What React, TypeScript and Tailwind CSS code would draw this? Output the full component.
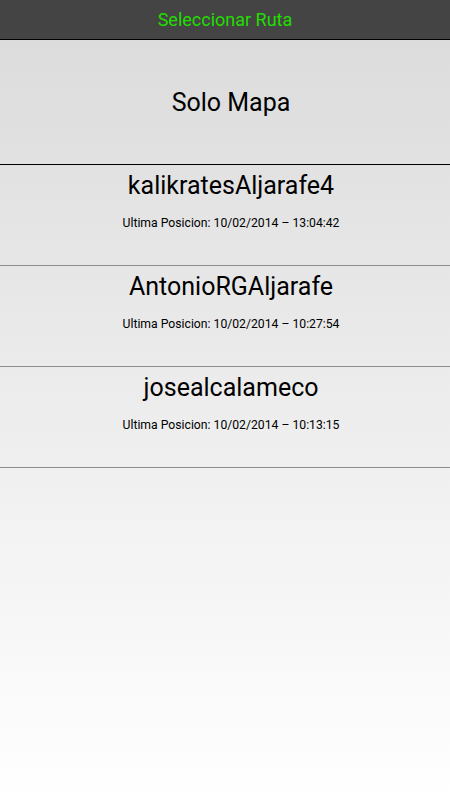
import React from "react";

const rows = [
  { name: "kalikratesAljarafe4", time: "10/02/2014 – 13:04:42" },
  { name: "AntonioRGAljarafe", time: "10/02/2014 – 10:27:54" },
  { name: "josealcalameco", time: "10/02/2014 – 10:13:15" },
];

export default function App() {
  return (
    <div
      className="w-[450px] h-[800px] flex flex-col bg-[linear-gradient(to_bottom,#dadada_0%,#ffffff_100%)]"
      style={{ fontFamily: "Roboto, 'Noto Sans', sans-serif" }}
    >
      <div className="h-[40px] bg-[#444444] border-b border-black flex items-center justify-center shrink-0">
        <span className="text-[18px] leading-[22px] text-[#22dd00]">Seleccionar Ruta</span>
      </div>
      <div className="h-[125px] border-b border-black flex items-center justify-center pt-[2px] pl-[12px] shrink-0">
        <span className="text-[25px] leading-[28px] text-black">Solo Mapa</span>
      </div>
      {rows.map((r) => (
        <div
          key={r.name}
          className="h-[101px] border-b border-[#8c8c8c] flex flex-col items-center pt-[6px] pl-[12px] shrink-0"
        >
          <span className="text-[25px] leading-[30px] text-black">{r.name}</span>
          <span className="mt-[15px] text-[12.2px] leading-[15px] text-black">
            Ultima Posicion: {r.time}
          </span>
        </div>
      ))}
    </div>
  );
}
